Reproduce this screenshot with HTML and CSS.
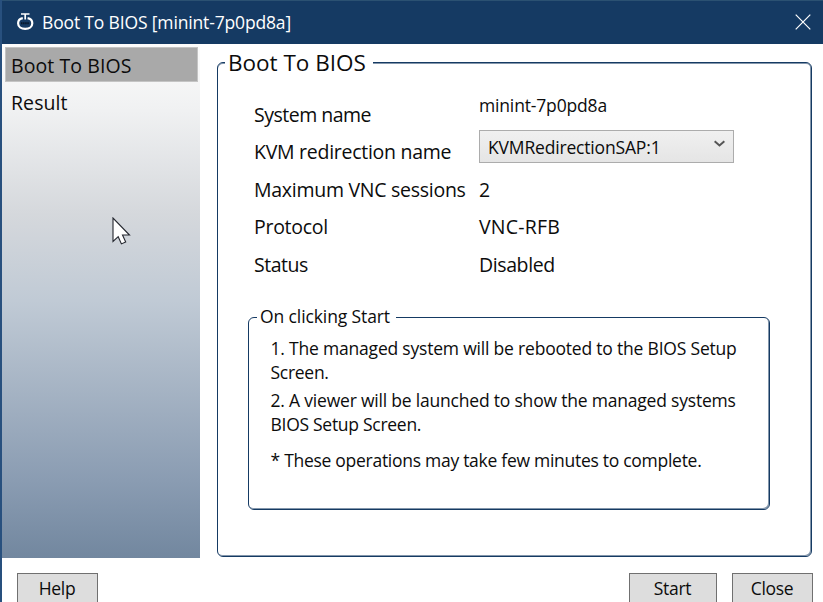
FILE: index.html
```html
<!DOCTYPE html>
<html lang="en">
<head>
<meta charset="utf-8">
<title>Boot To BIOS</title>
<link rel="stylesheet" href="styles.css">
</head>
<body>
<div class="window">
  <header class="titlebar">
    <svg class="app-icon" viewBox="0 0 20 20" width="20" height="20">
      <path d="M6 2h8.500M10.200 2v5.500" stroke="#fff" stroke-width="1.700" fill="none"/>
      <path d="M7.800 6.100C5 6.600 3.100 8.700 3.100 11.300c0 3.500 3.100 5.600 7.100 5.600s7.100-2.100 7.100-5.600c0-2.600-1.900-4.700-4.700-5.200" stroke="#fff" stroke-width="2.200" fill="none"/>
      <path d="M6 11.300h8.500" stroke="#07172b" stroke-width="2" stroke-dasharray="1.500 .6"/>
    </svg>
    <h1 class="title">Boot To BIOS [minint-7p0pd8a]</h1>
    <svg class="close" viewBox="0 0 16 16" width="16" height="16"><path d="M.7.7l14.600 14.600M15.300.7L.7 15.300" stroke="#fff" stroke-width="1.200" fill="none"/></svg>
  </header>
  <div class="body">
    <nav class="nav">
      <a class="nav-item selected">Boot To BIOS</a>
      <a class="nav-item">Result</a>
      <svg class="cursor" viewBox="0 0 19 29" width="19" height="29"><path d="M1 1v23.500l5.200-4.800 3.200 7.200 4.300-1.900-3.200-7h7z" fill="#fff" stroke="#23262e" stroke-width="1.100"/></svg>
    </nav>
    <main class="main">
      <fieldset class="group">
        <legend>Boot To BIOS</legend>
        <dl class="details">
          <dt class="tight">System name</dt><dd class="host">minint-7p0pd8a</dd>
          <dt>KVM redirection name</dt>
          <dd class="combo"><span>KVMRedirectionSAP:1</span><svg viewBox="0 0 10 7" width="11" height="8"><path d="M.6 1l4.400 3.800L9.400 1" stroke="#555" stroke-width="1.800" fill="none"/></svg></dd>
          <dt>Maximum VNC sessions</dt><dd>2</dd>
          <dt>Protocol</dt><dd class="wide">VNC-RFB</dd>
          <dt class="tight">Status</dt><dd class="snug">Disabled</dd>
        </dl>
        <fieldset class="group notes">
          <legend>On clicking Start</legend>
          <p>1. The managed system will be rebooted to the BIOS Setup<br><span class="close-set">Screen.</span></p>
          <p>2. A viewer will be launched to show the managed systems<br><span class="close-set">BIOS Setup Screen.</span></p>
          <p class="hint">* These operations may take few minutes to complete.</p>
        </fieldset>
      </fieldset>
    </main>
  </div>
  <footer class="footer">
    <button class="help">Help</button>
    <button class="start">Start</button>
    <button class="done">Close</button>
  </footer>
</div>
</body>
</html>
```
FILE: styles.css
```css
* { box-sizing: border-box; }
body { margin: 0; font-family: "Open Sans", "Noto Sans", sans-serif; font-size: 19.5px; color: #0c0c0c; background: #fff; }
.window { width: 823px; height: 602px; overflow: hidden; display: flex; flex-direction: column; border-left: 2px solid #28507e; }
.titlebar { height: 44px; flex: none; display: flex; align-items: center; background: #153a63; border-top: 1px solid #2b5172; padding: 0 12px 0 13px; color: #fff; }
.title { flex: 1; margin: -2px 0 0 7px; font-size: 17.5px; font-weight: 400; line-height: 24px; letter-spacing: -.155px; white-space: nowrap; }
.app-icon { margin-top: -2px; }
.close { margin-top: -2px; }
.body { display: flex; flex: none; height: 514px; }
.nav { position: relative; width: 198px; padding: 3px 2px 0 3px; background: linear-gradient(#fcfcfc 0%, #f0f1f2 13%, #d5d8dc 33%, #c0cad5 50%, #8a9cb2 85%, #72879f 100%); }
.nav-item { display: block; height: 35px; line-height: 35px; padding-left: 5px; margin-bottom: 2px; border: 1px solid transparent; white-space: nowrap; letter-spacing: .08px; }
.selected { background: #a9a9a9; border-color: #c4c4c4; }
.cursor { position: absolute; left: 110px; top: 173px; }
.main { padding: 5px 11px 0 17px; flex: 1; }
.group { margin: 0; padding: 0; min-width: 0; border: 1px solid #153a63; border-radius: 6px; box-shadow: inset -1px -1px #8396ab; }
.group legend { margin-left: 8px; padding: 0 6px 0 3px; background: #fff; white-space: nowrap; }
.main > .group { height: 508px; box-shadow: inset -1px -1px #8396ab, inset 0 1px #8396ab; }
.main > .group > legend { font-size: 22.5px; line-height: 27px; margin-left: 7px; padding-right: 7px; }
.details { display: grid; grid-template-columns: 225px 255px; grid-auto-rows: 37.5px; margin: 19.6px 0 0 36px; line-height: 37px; letter-spacing: -.27px; white-space: nowrap; }
.details dd { margin: 0; }
.details .tight { letter-spacing: -.5px; }
.details .snug { letter-spacing: -.4px; }
.details .wide { letter-spacing: .205px; }
.details .host { font-size: 17.500px; line-height: 18px; letter-spacing: -.16px; }
.combo { display: flex; justify-content: space-between; height: 33px; align-items: center; margin-top: -3.600px !important; padding: 0 8px; border: 1px solid #acacac; background: linear-gradient(#f0f0f0, #e5e5e5); font-size: 17.500px; letter-spacing: -.17px; }
.combo span { padding-top: 2px; }
.combo svg { margin-top: -4px; }
.notes { margin: 21.400px 41px 0 30px; height: 206px; font-size: 17.500px; line-height: 24px; letter-spacing: -.2px; }
.notes p { margin: 0 0 4px 21.500px; white-space: nowrap; }
.notes legend { padding-bottom: 2px; margin-top: -1px; letter-spacing: -.108px; }
.notes legend + p { margin-top: 6px; }
.notes .hint { margin-top: 12px; letter-spacing: -.279px; }
.close-set { letter-spacing: -.28px; }
.footer { display: flex; padding: 15px 10px 0 15px; gap: 15px; }
.footer button { height: 32px; padding: 0 1px 2px 0; border: 1px solid #707070; background: #ddd; font: inherit; font-size: 17.500px; line-height: 28px; letter-spacing: -.3px; color: #0c0c0c; }
.help { width: 81px; margin-right: auto; }
.start { width: 88px; }
.done { width: 81px; }
```
